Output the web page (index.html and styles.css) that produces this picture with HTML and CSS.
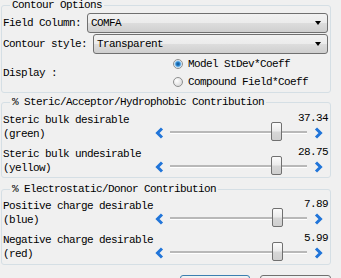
FILE: index.html
```html
<!DOCTYPE html>
<html>
<head>
<meta charset="utf-8">
<link rel="stylesheet" href="styles.css">
</head>
<body>
<fieldset class="group g1">
  <legend>Contour Options</legend>
  <div class="combo-row">
    <span class="lbl">Field Column:</span>
    <div class="combo"><span class="combo-text">COMFA</span><span class="caret"></span></div>
  </div>
  <div class="combo-row">
    <span class="lbl">Contour style:</span>
    <div class="combo"><span class="combo-text">Transparent</span><span class="caret"></span></div>
  </div>
  <div class="display-row">
    <span class="display-lbl">Display :</span>
    <div class="radios">
      <div class="radio"><span class="dot checked"></span><span>Model StDev*Coeff</span></div>
      <div class="radio"><span class="dot"></span><span>Compound Field*Coeff</span></div>
    </div>
  </div>
</fieldset>

<fieldset class="group g2">
  <legend>% Steric/Acceptor/Hydrophobic Contribution</legend>
  <div class="srow">
    <div class="slbl">Steric bulk desirable<br>(green)</div>
    <div class="sctl">
      <div class="val">37.34</div>
      <div class="slider">
        <svg class="arr" viewBox="0 0 11 12"><polyline points="8,1.5 3.5,6 8,10.5"/></svg>
        <div class="track"><div class="thumb" style="left:101px"></div></div>
        <svg class="arr" viewBox="0 0 11 12"><polyline points="3,1.5 7.5,6 3,10.5"/></svg>
      </div>
    </div>
  </div>
  <div class="srow">
    <div class="slbl">Steric bulk undesirable<br>(yellow)</div>
    <div class="sctl">
      <div class="val">28.75</div>
      <div class="slider">
        <svg class="arr" viewBox="0 0 11 12"><polyline points="8,1.5 3.5,6 8,10.5"/></svg>
        <div class="track"><div class="thumb" style="left:101px"></div></div>
        <svg class="arr" viewBox="0 0 11 12"><polyline points="3,1.5 7.5,6 3,10.5"/></svg>
      </div>
    </div>
  </div>
</fieldset>

<fieldset class="group g3">
  <legend>% Electrostatic/Donor Contribution</legend>
  <div class="srow">
    <div class="slbl">Positive charge desirable<br>(blue)</div>
    <div class="sctl">
      <div class="val">7.89</div>
      <div class="slider">
        <svg class="arr" viewBox="0 0 11 12"><polyline points="8,1.5 3.5,6 8,10.5"/></svg>
        <div class="track"><div class="thumb" style="left:102px"></div></div>
        <svg class="arr" viewBox="0 0 11 12"><polyline points="3,1.5 7.5,6 3,10.5"/></svg>
      </div>
    </div>
  </div>
  <div class="srow">
    <div class="slbl">Negative charge desirable<br>(red)</div>
    <div class="sctl">
      <div class="val">5.99</div>
      <div class="slider">
        <svg class="arr" viewBox="0 0 11 12"><polyline points="8,1.5 3.5,6 8,10.5"/></svg>
        <div class="track"><div class="thumb" style="left:102px"></div></div>
        <svg class="arr" viewBox="0 0 11 12"><polyline points="3,1.5 7.5,6 3,10.5"/></svg>
      </div>
    </div>
  </div>
</fieldset>

<div class="buttons">
  <div class="btn default"></div>
  <div class="btn"></div>
</div>
</body>
</html>
```

FILE: styles.css
```css
* { box-sizing: border-box; }
html, body { margin: 0; padding: 0; }
body {
  width: 341px;
  background: #f0f0f0;
  font-family: "Liberation Mono", "DejaVu Sans Mono", monospace;
  font-size: 11px;
  letter-spacing: -0.6px;
  color: #000;
}

.group {
  margin: 0 10px 0 1px;
  padding: 0 1px;
  border: 1px solid #d5dfe5;
  border-radius: 3px;
  min-width: 0;
}
.group legend {
  margin-left: 7px;
  padding: 0 2px;
  height: 10px;
  line-height: 10px;
}

.g1 { padding-top: 3px; padding-bottom: 1px; }
.g2 { margin-top: 4px; padding-top: 6px; padding-bottom: 1px; }
.g3 { margin-top: 6px; padding-top: 5px; padding-bottom: 2px; }

.combo-row {
  display: flex;
  align-items: center;
  height: 20px;
  margin-bottom: 1px;
}
.lbl { white-space: pre; }
.combo {
  flex: 1;
  margin-left: 6px;
  margin-right: 1px;
  height: 20px;
  border: 1px solid #707070;
  border-radius: 3px;
  background: linear-gradient(#f2f2f2 0%, #ebebeb 50%, #dddddd 50%, #cfcfcf 100%);
  display: flex;
  align-items: center;
  padding-left: 3px;
  padding-right: 6px;
}
.combo-text { flex: 1; }
.caret {
  width: 0;
  height: 0;
  border-left: 3.5px solid transparent;
  border-right: 3.5px solid transparent;
  border-top: 4px solid #000;
}

.display-row {
  display: flex;
  align-items: center;
}
.display-lbl { width: 170px; }
.radios { display: flex; flex-direction: column; }
.radio {
  display: flex;
  align-items: center;
  height: 18px;
}
.dot {
  width: 10px;
  height: 10px;
  border-radius: 50%;
  border: 1px solid #8e8f8f;
  background: radial-gradient(circle at 35% 35%, #ffffff 0%, #e4e4e4 60%, #d0d0d0 100%);
  margin-right: 5px;
}
.dot.checked {
  background: radial-gradient(circle at 50% 50%, #0a4c8a 0%, #2a86d1 35%, #9fd0f5 55%, #f4f4f4 70%, #dcdcdc 100%);
}

.srow {
  display: flex;
  align-items: flex-start;
  margin-bottom: 5px;
}
.srow:last-child { margin-bottom: 0; }
.slbl {
  flex: 1;
  min-width: 0;
  white-space: nowrap;
  line-height: 14px;
}
.sctl {
  width: 176px;
  flex: none;
  display: flex;
  flex-direction: column;
}
.val {
  text-align: right;
  line-height: 10px;
  padding-right: 1px;
}
.slider {
  display: flex;
  align-items: center;
  height: 19px;
  padding-left: 1px;
  padding-right: 5px;
}
.arr {
  width: 11px;
  height: 12px;
  flex: none;
}
.arr polyline {
  fill: none;
  stroke: #2175d9;
  stroke-width: 3;
}
.track {
  flex: 1;
  height: 2px;
  margin: 0 6px 0 5px;
  background: #b8b8b8;
  border-bottom: 1px solid #ffffff;
  box-sizing: content-box;
  position: relative;
}
.thumb {
  position: absolute;
  top: -9px;
  width: 11px;
  height: 19px;
  border: 1px solid #707070;
  border-radius: 2px;
  background: linear-gradient(#fbfbfb 0%, #ececec 45%, #d6d6d6 55%, #cfcfcf 100%);
}

.buttons {
  display: flex;
  margin-top: 10px;
  padding-left: 180px;
  gap: 10px;
}
.btn {
  flex: none;
  width: 71px;
  height: 22px;
  border: 1px solid #707070;
  border-radius: 3px;
  background: linear-gradient(#f2f2f2, #dddddd);
}
.btn.default {
  border-color: #3c7fb1;
  width: 70px;
}
```
